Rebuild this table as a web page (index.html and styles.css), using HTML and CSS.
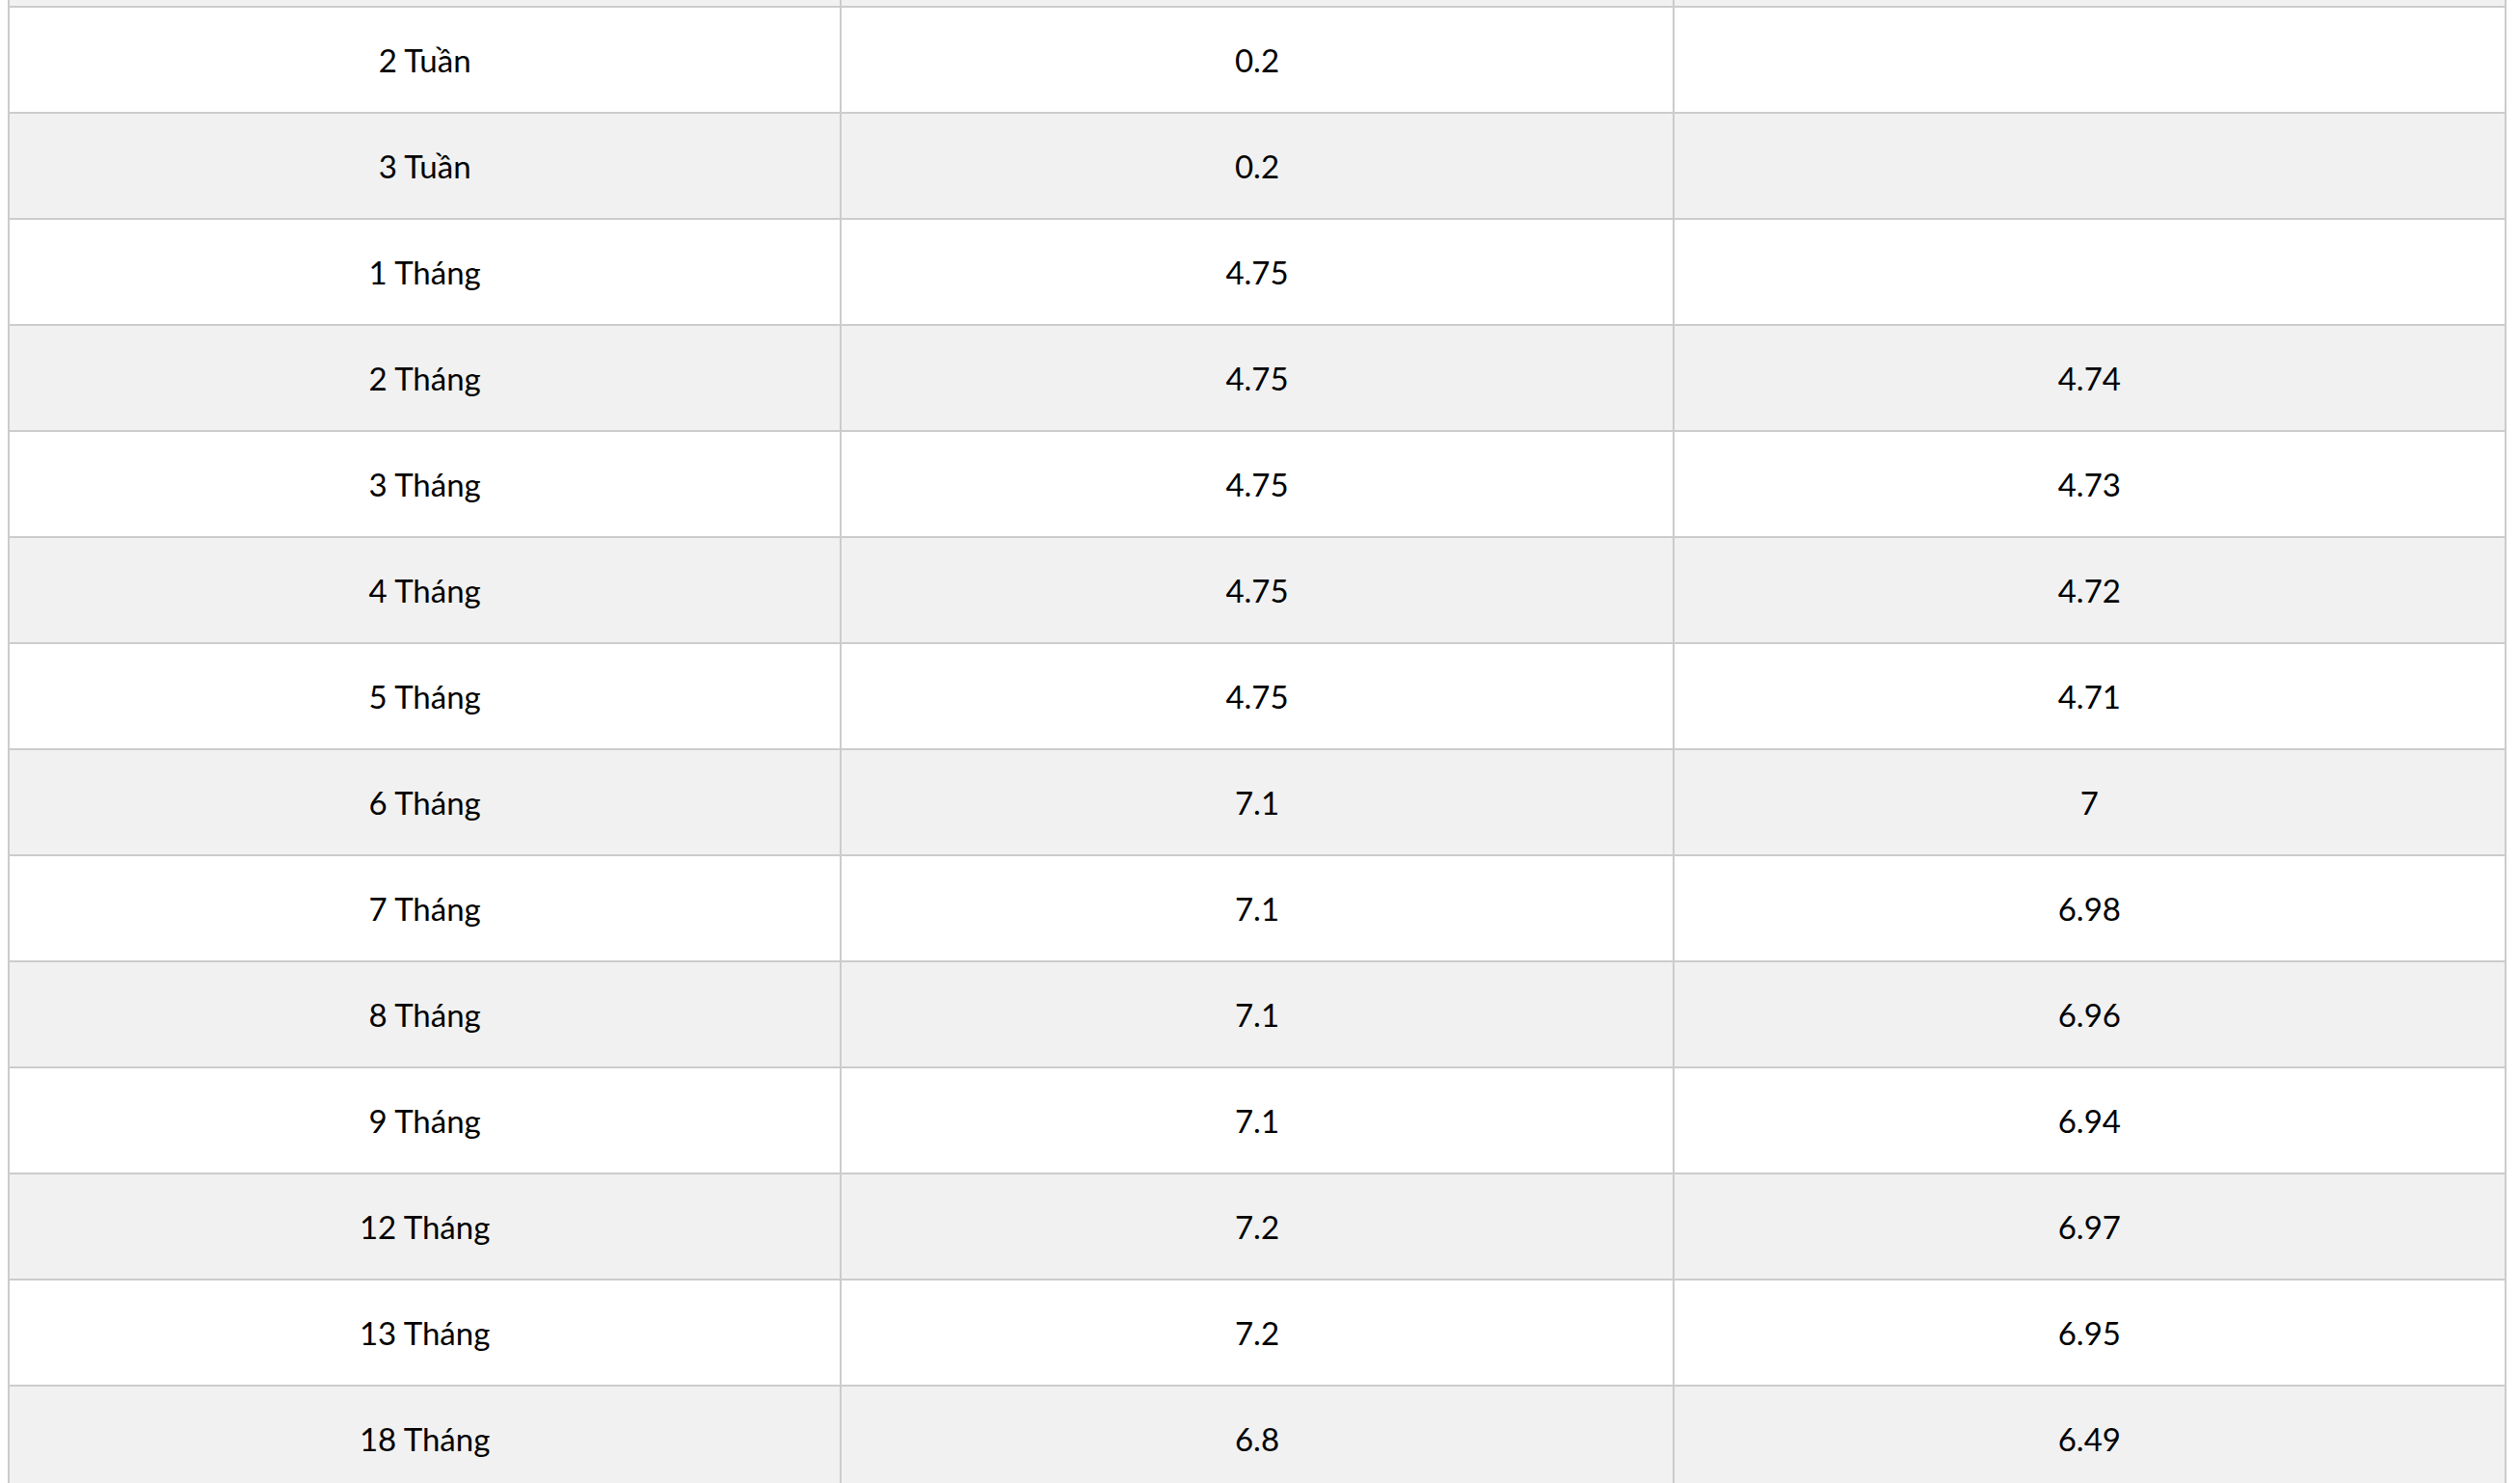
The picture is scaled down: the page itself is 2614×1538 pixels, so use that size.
FILE: index.html
```html
<!DOCTYPE html>
<html lang="vi">
<head>
<meta charset="utf-8">
<title>Lãi suất</title>
<link rel="stylesheet" href="styles.css">
</head>
<body>
<table class="rates">
<tbody>
<tr class="cut"><td></td><td></td><td></td></tr>
<tr><td>2 Tuần</td><td>0.2</td><td></td></tr>
<tr><td>3 Tuần</td><td>0.2</td><td></td></tr>
<tr><td>1 Tháng</td><td>4.75</td><td></td></tr>
<tr><td>2 Tháng</td><td>4.75</td><td>4.74</td></tr>
<tr><td>3 Tháng</td><td>4.75</td><td>4.73</td></tr>
<tr><td>4 Tháng</td><td>4.75</td><td>4.72</td></tr>
<tr><td>5 Tháng</td><td>4.75</td><td>4.71</td></tr>
<tr><td>6 Tháng</td><td>7.1</td><td>7</td></tr>
<tr><td>7 Tháng</td><td>7.1</td><td>6.98</td></tr>
<tr><td>8 Tháng</td><td>7.1</td><td>6.96</td></tr>
<tr><td>9 Tháng</td><td>7.1</td><td>6.94</td></tr>
<tr><td>12 Tháng</td><td>7.2</td><td>6.97</td></tr>
<tr><td>13 Tháng</td><td>7.2</td><td>6.95</td></tr>
<tr><td>18 Tháng</td><td>6.8</td><td>6.49</td></tr>
</tbody>
</table>
</body>
</html>
```
FILE: styles.css
```css
html, body {
  background: #ffffff;
}
body {
  margin: 0 8px;
  font-family: Lato, "Open Sans", sans-serif;
  color: #000000;
}
.rates {
  width: 2592px;
  border-collapse: collapse;
  table-layout: fixed;
}
.rates td {
  border: 2px solid #cccccc;
  height: 108px;
  padding: 0;
  text-align: center;
  vertical-align: middle;
  font-size: 33px;
  line-height: 40px;
}
.rates tr:nth-child(odd) td {
  background: #f1f1f1;
}
.rates tr.cut td {
  height: 6px;
  border-top: 0;
}
```
